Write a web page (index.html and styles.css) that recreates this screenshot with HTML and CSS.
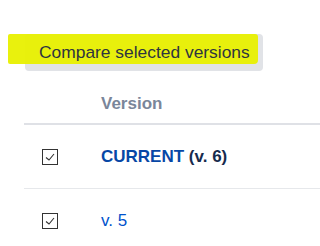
FILE: index.html
```html
<!DOCTYPE html>
<html lang="en">
<head>
<meta charset="utf-8">
<link rel="stylesheet" href="styles.css">
</head>
<body>
<div class="page">
  <div class="toolbar">
    <span class="highlight"></span>
    <button class="compare-btn" type="button"><span class="btn-label">Compare selected versions</span></button>
  </div>
  <div class="table">
    <div class="row head">
      <div class="cell-check"></div>
      <div class="cell-version head-label">Version</div>
    </div>
    <div class="row">
      <div class="cell-check">
        <span class="checkbox"><svg viewBox="0 0 16 16" width="16" height="16"><polyline points="4,8.5 7,11 12,5" fill="none" stroke="#333" stroke-width="1.1"/></svg></span>
      </div>
      <div class="cell-version"><a class="link strong">CURRENT</a> <span class="ver-no">(v. 6)</span></div>
    </div>
    <div class="row">
      <div class="cell-check">
        <span class="checkbox"><svg viewBox="0 0 16 16" width="16" height="16"><polyline points="4,8.5 7,11 12,5" fill="none" stroke="#333" stroke-width="1.1"/></svg></span>
      </div>
      <div class="cell-version"><a class="link">v. 5</a></div>
    </div>
  </div>
</div>
</body>
</html>
```
FILE: styles.css
```css
html, body {
  margin: 0;
  padding: 0;
  background: #ffffff;
}
body {
  font-family: "Liberation Sans", Arial, sans-serif;
  color: #172b4d;
  overflow: hidden;
}
.page {
  padding: 34px 0 0 24px;
}
.toolbar {
  position: relative;
  height: 37px;
}
.compare-btn {
  position: relative;
  margin-left: 1px;
  height: 37px;
  width: 238px;
  padding: 0 0 0 14px;
  border: none;
  border-radius: 4px;
  background: #e1e3e7;
  color: #2e3440;
  font-family: "Liberation Sans", Arial, sans-serif;
  font-size: 17.4px;
  text-align: left;
  white-space: nowrap;
}
.btn-label {
  position: relative;
  z-index: 3;
}
.highlight {
  position: absolute;
  left: -16px;
  top: 0;
  width: 250px;
  height: 30px;
  background: rgba(232, 240, 0, 0.95);
  border-radius: 2px 3px 4px 2px;
  z-index: 2;
  pointer-events: none;
}
.table {
  margin-top: 14px;
}
.row {
  display: flex;
  align-items: center;
  height: 63px;
  border-bottom: 1px solid #e6e8eb;
}
.row.head {
  height: 38px;
  border-bottom: 2px solid #dfe1e6;
}
.cell-check {
  width: 77px;
  padding-left: 18px;
  box-sizing: border-box;
  display: flex;
  align-items: center;
}
.checkbox {
  display: block;
  width: 16px;
  height: 16px;
  box-sizing: border-box;
  border: 1px solid #333333;
  background: #fff;
}
.checkbox svg {
  display: block;
  margin: -1px;
}
.head-label {
  color: #7a869a;
  font-weight: bold;
  font-size: 14px;
}
.cell-version {
  font-size: 17px;
}
.link {
  color: #0052cc;
  text-decoration: none;
}
.strong {
  font-weight: bold;
  color: #0747a6;
}
.ver-no {
  font-weight: bold;
  color: #172b4d;
}
```
